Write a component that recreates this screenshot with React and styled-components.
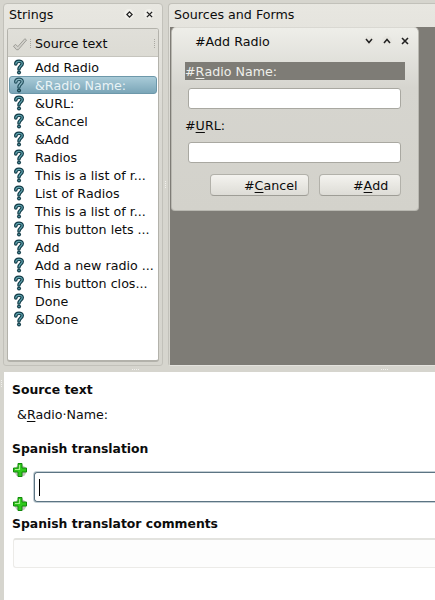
import React from "react";
import styled, { createGlobalStyle } from "styled-components";

const GlobalStyle = createGlobalStyle`
  html, body {
    margin: 0;
    padding: 0;
    height: 100%;
    overflow: hidden;
    background: #d6d5ce;
    font-family: "DejaVu Sans", sans-serif;
    font-size: 12.67px;
    color: #0c0c0c;
  }
`;

const Window = styled.div`
  width: 435px;
  height: 600px;
  display: flex;
  flex-direction: column;
  overflow: hidden;
  background: #d6d5ce;
`;

const TopArea = styled.div`
  height: 369px;
  display: flex;
  padding: 3px 0 0 3px;
  box-sizing: border-box;
  flex: none;
`;

const Dock = styled.div`
  display: flex;
  flex-direction: column;
  box-sizing: border-box;
  flex: none;
  background: linear-gradient(#e8e7e1, #d9d8d2 120px, #d6d5ce);
  border: 1px solid #c2c1ba;
  border-radius: 4px 4px 3px 3px;
  width: ${(p) => p.$width}px;
  height: 363px;
  ${(p) => p.$open && "border-right: none; border-radius: 4px 0 0 3px; border-bottom-color: #e4e3de;"}
`;

const DockTitle = styled.div`
  height: 20px;
  flex: none;
  display: flex;
  align-items: center;
  justify-content: space-between;
  padding: 0 8px 0 5px;
  margin-bottom: 3px;
`;

const DockButtons = styled.div`
  display: flex;
  gap: 10px;
  align-items: center;
`;

const RoundButton = styled.span`
  width: 10px;
  height: 10px;
  display: flex;
  align-items: center;
  justify-content: center;
  border-radius: 50%;
  background: ${(p) => p.$bg || "#f0efea"};
`;

const ListBox = styled.div`
  margin: 1px 3px 3px 3px;
  flex: 1;
  display: flex;
  flex-direction: column;
  box-sizing: border-box;
  background: #fff;
  border: 1px solid #b3b2ab;
  border-bottom-width: 2px;
  border-radius: 3px;
  overflow: hidden;
`;

const ListHeader = styled.div`
  height: 28px;
  flex: none;
  box-sizing: border-box;
  display: flex;
  align-items: center;
  background: linear-gradient(#e0dfd9, #dcdbd4);
  border-bottom: 1px solid #c6c5be;
  padding: 2px 0 0 4px;
`;

const HeaderLabel = styled.span`
  margin-left: 3px;
  flex: 1;
`;

const Grip = styled.span`
  width: 1px;
  height: 9px;
  margin-right: ${(p) => p.$right || 0}px;
  margin-left: ${(p) => p.$left || 0}px;
  border-left: 1px dotted #a9a8a1;
`;

const Rows = styled.div`
  padding: 1px 1px 0;
`;

const Row = styled.div`
  height: 18px;
  display: flex;
  align-items: center;
  box-sizing: border-box;
  padding-left: 4px;
  white-space: nowrap;
  ${(p) =>
    p.$selected &&
    `
    background: linear-gradient(#a9cbd8, #7ba6b8);
    border: 1px solid #6d98aa;
    border-radius: 3px;
    padding-left: 3px;
    color: #e9f3f6;
  `}
`;

const RowLabel = styled.span`
  margin-left: 10px;
`;

const DockSplit = styled.div`
  width: 5px;
  flex: none;
  height: 363px;
  display: flex;
  align-items: center;
  justify-content: center;
`;

const Dots = styled.span`
  display: block;
  width: ${(p) => (p.$vertical ? 1 : 7)}px;
  height: ${(p) => (p.$vertical ? 7 : 1)}px;
  border-top: ${(p) => (p.$vertical ? "none" : "1px dotted #f1f0ec")};
  border-left: ${(p) => (p.$vertical ? "1px dotted #f1f0ec" : "none")};
`;

const MdiArea = styled.div`
  margin: 0 0 0 1px;
  flex: 1;
  background: #7e7c76;
  padding-left: 1px;
  box-sizing: border-box;
`;

const SubWindow = styled.div`
  width: 248px;
  height: 184px;
  box-sizing: border-box;
  background: linear-gradient(#eeeee9, #d6d5cf 60px, #d3d2cb);
  border: 1px solid #b9b8b1;
  border-top-color: #d9d8d2;
  border-radius: 5px 5px 4px 4px;
  display: flex;
  flex-direction: column;
`;

const SubTitle = styled.div`
  height: 24px;
  flex: none;
  margin-top: 1px;
  display: flex;
  align-items: center;
  justify-content: space-between;
  padding: 0 8px 0 23px;
`;

const SubButtons = styled.div`
  display: flex;
  gap: 8px;
  align-items: center;
`;

const FormBody = styled.div`
  padding: 9px 13px 0 13px;
  display: flex;
  flex-direction: column;
`;

const FieldLabel = styled.div`
  height: 18px;
  line-height: 17px;
  display: flex;
  align-items: center;
  white-space: pre;
  ${(p) => p.$active && "background: #7e7c76; color: #efefea;"}
`;

const TextField = styled.div`
  height: 21px;
  box-sizing: border-box;
  margin: 8px 0 0 3px;
  width: 213px;
  background: #fff;
  border: 1px solid #a9a8a1;
  border-radius: 3px;
`;

const FieldGap = styled.div`
  height: ${(p) => p.$h}px;
`;

const ButtonRow = styled.div`
  display: flex;
  gap: 10px;
  margin: 11px 0 0 25px;
`;

const PushButton = styled.div`
  height: 22px;
  width: ${(p) => p.$width}px;
  box-sizing: border-box;
  display: flex;
  align-items: center;
  padding-left: ${(p) => p.$pad}px;
  white-space: pre;
  background: linear-gradient(#f4f3ef, #dddcd6);
  border: 1px solid #b2b1aa;
  border-bottom-color: #9e9d96;
  border-radius: 4px;
`;

const U = styled.span`
  text-decoration: underline;
  text-underline-offset: 2px;
`;

const Splitter = styled.div`
  height: 3px;
  flex: none;
  padding-left: 132px;
  display: flex;
  gap: 242px;
`;

const Lower = styled.div`
  flex: 1;
  display: flex;
  min-height: 0;
`;

const LeftStrip = styled.div`
  width: 4px;
  flex: none;
  display: flex;
  justify-content: center;
  padding-top: 8px;
  box-sizing: border-box;
`;

const Editor = styled.div`
  flex: 1;
  min-width: 0;
  background: #fff;
  padding-top: 10px;
  box-sizing: border-box;
  display: flex;
  flex-direction: column;
`;

const SectionTitle = styled.div`
  font-weight: 700;
  font-size: 12.4px;
  height: 16px;
  line-height: 16px;
  margin-left: 8px;
  white-space: nowrap;
`;

const SourceLine = styled.div`
  margin: 9px 0 0 13px;
  height: 16px;
  line-height: 16px;
  white-space: pre;
`;

const TranslationRow = styled.div`
  display: flex;
  margin-top: 6px;
  height: 53px;
`;

const PlusColumn = styled.div`
  width: 30px;
  height: 48px;
  flex: none;
  display: flex;
  flex-direction: column;
  justify-content: space-between;
  align-items: flex-start;
  padding-left: 9px;
  box-sizing: border-box;
`;

const TranslationInput = styled.div`
  flex: 1;
  height: 30px;
  margin-top: 9px;
  box-sizing: border-box;
  border: 1px solid #5c7483;
  border-right: none;
  border-radius: 3px 0 0 3px;
  box-shadow: 0 0 0 1px #c4cfd5;
  display: flex;
  align-items: center;
  padding-left: 4px;
`;

const Caret = styled.span`
  width: 1px;
  height: 17px;
  background: #000;
`;

const CommentBox = styled.div`
  margin: 6px 0 0 9px;
  height: 30px;
  box-sizing: border-box;
  background: #fdfdfd;
  border: 1px solid #ecebe8;
  border-top: 2px solid #e3e3df;
  border-right: none;
  border-radius: 3px 0 0 3px;
`;

const STRINGS = [
  "Add Radio",
  "&Radio Name:",
  "&URL:",
  "&Cancel",
  "&Add",
  "Radios",
  "This is a list of r...",
  "List of Radios",
  "This is a list of r...",
  "This button lets ...",
  "Add",
  "Add a new radio ...",
  "This button clos...",
  "Done",
  "&Done",
];

const CheckIcon = () => (
  <svg width="16" height="14" viewBox="0 0 18 16">
    <path
      d="M1.5 10.5 L4 8.5 L6.5 11 L14.5 2 L16.5 3.5 L7 14.5 L5 14.5 Z"
      fill="#d2d1cb"
      stroke="#96958f"
      strokeWidth="1"
      strokeLinejoin="round"
    />
  </svg>
);

const QuestionIcon = ({ light }) => (
  <svg width="12" height="16" viewBox="0 0 12 16" style={{ flex: "none" }}>
    <path
      d="M2.8 5 C2.8 1.5 9.2 1.5 9.2 4.5 C9.2 7 6.2 7 6 10"
      fill="none"
      stroke={light ? "#24505e" : "#123c48"}
      strokeWidth="3.6"
      strokeLinecap="round"
    />
    <path
      d="M2.8 5 C2.8 1.5 9.2 1.5 9.2 4.5 C9.2 7 6.2 7 6 10"
      fill="none"
      stroke={light ? "#8ab8c4" : "#5fa3ae"}
      strokeWidth="1.2"
      strokeLinecap="round"
    />
    <circle cx="6" cy="13.5" r="2" fill="#123c48" />
    <circle cx="6" cy="13.5" r="0.8" fill="#5fa3ae" />
  </svg>
);

const PlusIcon = () => (
  <svg width="14" height="14" viewBox="0 0 14 14">
    <circle cx="7.5" cy="8" r="6" fill="#c4c4c0" />
    <path
      d="M5 0.5 H9 V5 H13.5 V9 H9 V13.5 H5 V9 H0.5 V5 H5 Z"
      fill="#2fc81c"
      stroke="#128a0a"
      strokeWidth="1"
      strokeLinejoin="round"
    />
    <path d="M6.5 2 V7 M2 6.5 H7" stroke="#a6f08e" strokeWidth="1.2" />
  </svg>
);

const Chevron = ({ up }) => (
  <svg width="8" height="6" viewBox="0 0 8 6">
    <path
      d={up ? "M1 5 L4 1.5 L7 5" : "M1 1 L4 4.5 L7 1"}
      fill="none"
      stroke="#222"
      strokeWidth="1.5"
    />
  </svg>
);

const CloseGlyph = ({ size = 7 }) => (
  <svg width={size} height={size} viewBox="0 0 8 8">
    <path d="M1 1 L7 7 M7 1 L1 7" stroke="#222" strokeWidth="1.6" />
  </svg>
);

const FloatGlyph = () => (
  <svg width="7" height="7" viewBox="0 0 8 8">
    <path d="M4 1 L7 4 L4 7 L1 4 Z" fill="none" stroke="#222" strokeWidth="1.4" />
  </svg>
);

export default function App() {
  return (
    <Window>
      <GlobalStyle />
      <TopArea>
        <Dock $width={160}>
          <DockTitle>
            <span>Strings</span>
            <DockButtons>
              <RoundButton>
                <FloatGlyph />
              </RoundButton>
              <RoundButton>
                <CloseGlyph />
              </RoundButton>
            </DockButtons>
          </DockTitle>
          <ListBox>
            <ListHeader>
              <CheckIcon />
              <Grip $left={2} />
              <HeaderLabel>Source text</HeaderLabel>
              <Grip $right={2} />
            </ListHeader>
            <Rows>
              {STRINGS.map((text, i) => (
                <Row key={i} $selected={i === 1}>
                  <QuestionIcon light={i === 1} />
                  <RowLabel>{text}</RowLabel>
                </Row>
              ))}
            </Rows>
          </ListBox>
        </Dock>
        <DockSplit>
          <Dots $vertical />
        </DockSplit>
        <Dock $width={267} $open>
          <DockTitle>
            <span>Sources and Forms</span>
          </DockTitle>
          <MdiArea>
            <SubWindow>
              <SubTitle>
                <span>#Add Radio</span>
                <SubButtons>
                  <RoundButton $bg="#e6e5df">
                    <Chevron />
                  </RoundButton>
                  <RoundButton $bg="#e6e5df">
                    <Chevron up />
                  </RoundButton>
                  <RoundButton $bg="transparent">
                    <CloseGlyph size={8} />
                  </RoundButton>
                </SubButtons>
              </SubTitle>
              <FormBody>
                <FieldLabel $active>
                  #<U>R</U>adio Name:
                </FieldLabel>
                <TextField />
                <FieldGap $h={7} />
                <FieldLabel>
                  #<U>U</U>RL:
                </FieldLabel>
                <TextField />
                <ButtonRow>
                  <PushButton $width={99} $pad={33}>
                    #<U>C</U>ancel
                  </PushButton>
                  <PushButton $width={82} $pad={33}>
                    #<U>A</U>dd
                  </PushButton>
                </ButtonRow>
              </FormBody>
            </SubWindow>
          </MdiArea>
        </Dock>
      </TopArea>
      <Splitter>
        <Dots />
        <Dots />
      </Splitter>
      <Lower>
        <LeftStrip>
          <Dots $vertical />
        </LeftStrip>
        <Editor>
          <SectionTitle>Source text</SectionTitle>
          <SourceLine>
            &amp;<U>R</U>adio·Name:
          </SourceLine>
          <FieldGap $h={18} />
          <SectionTitle>Spanish translation</SectionTitle>
          <TranslationRow>
            <PlusColumn>
              <PlusIcon />
              <PlusIcon />
            </PlusColumn>
            <TranslationInput>
              <Caret />
            </TranslationInput>
          </TranslationRow>
          <SectionTitle>Spanish translator comments</SectionTitle>
          <CommentBox />
        </Editor>
      </Lower>
    </Window>
  );
}
